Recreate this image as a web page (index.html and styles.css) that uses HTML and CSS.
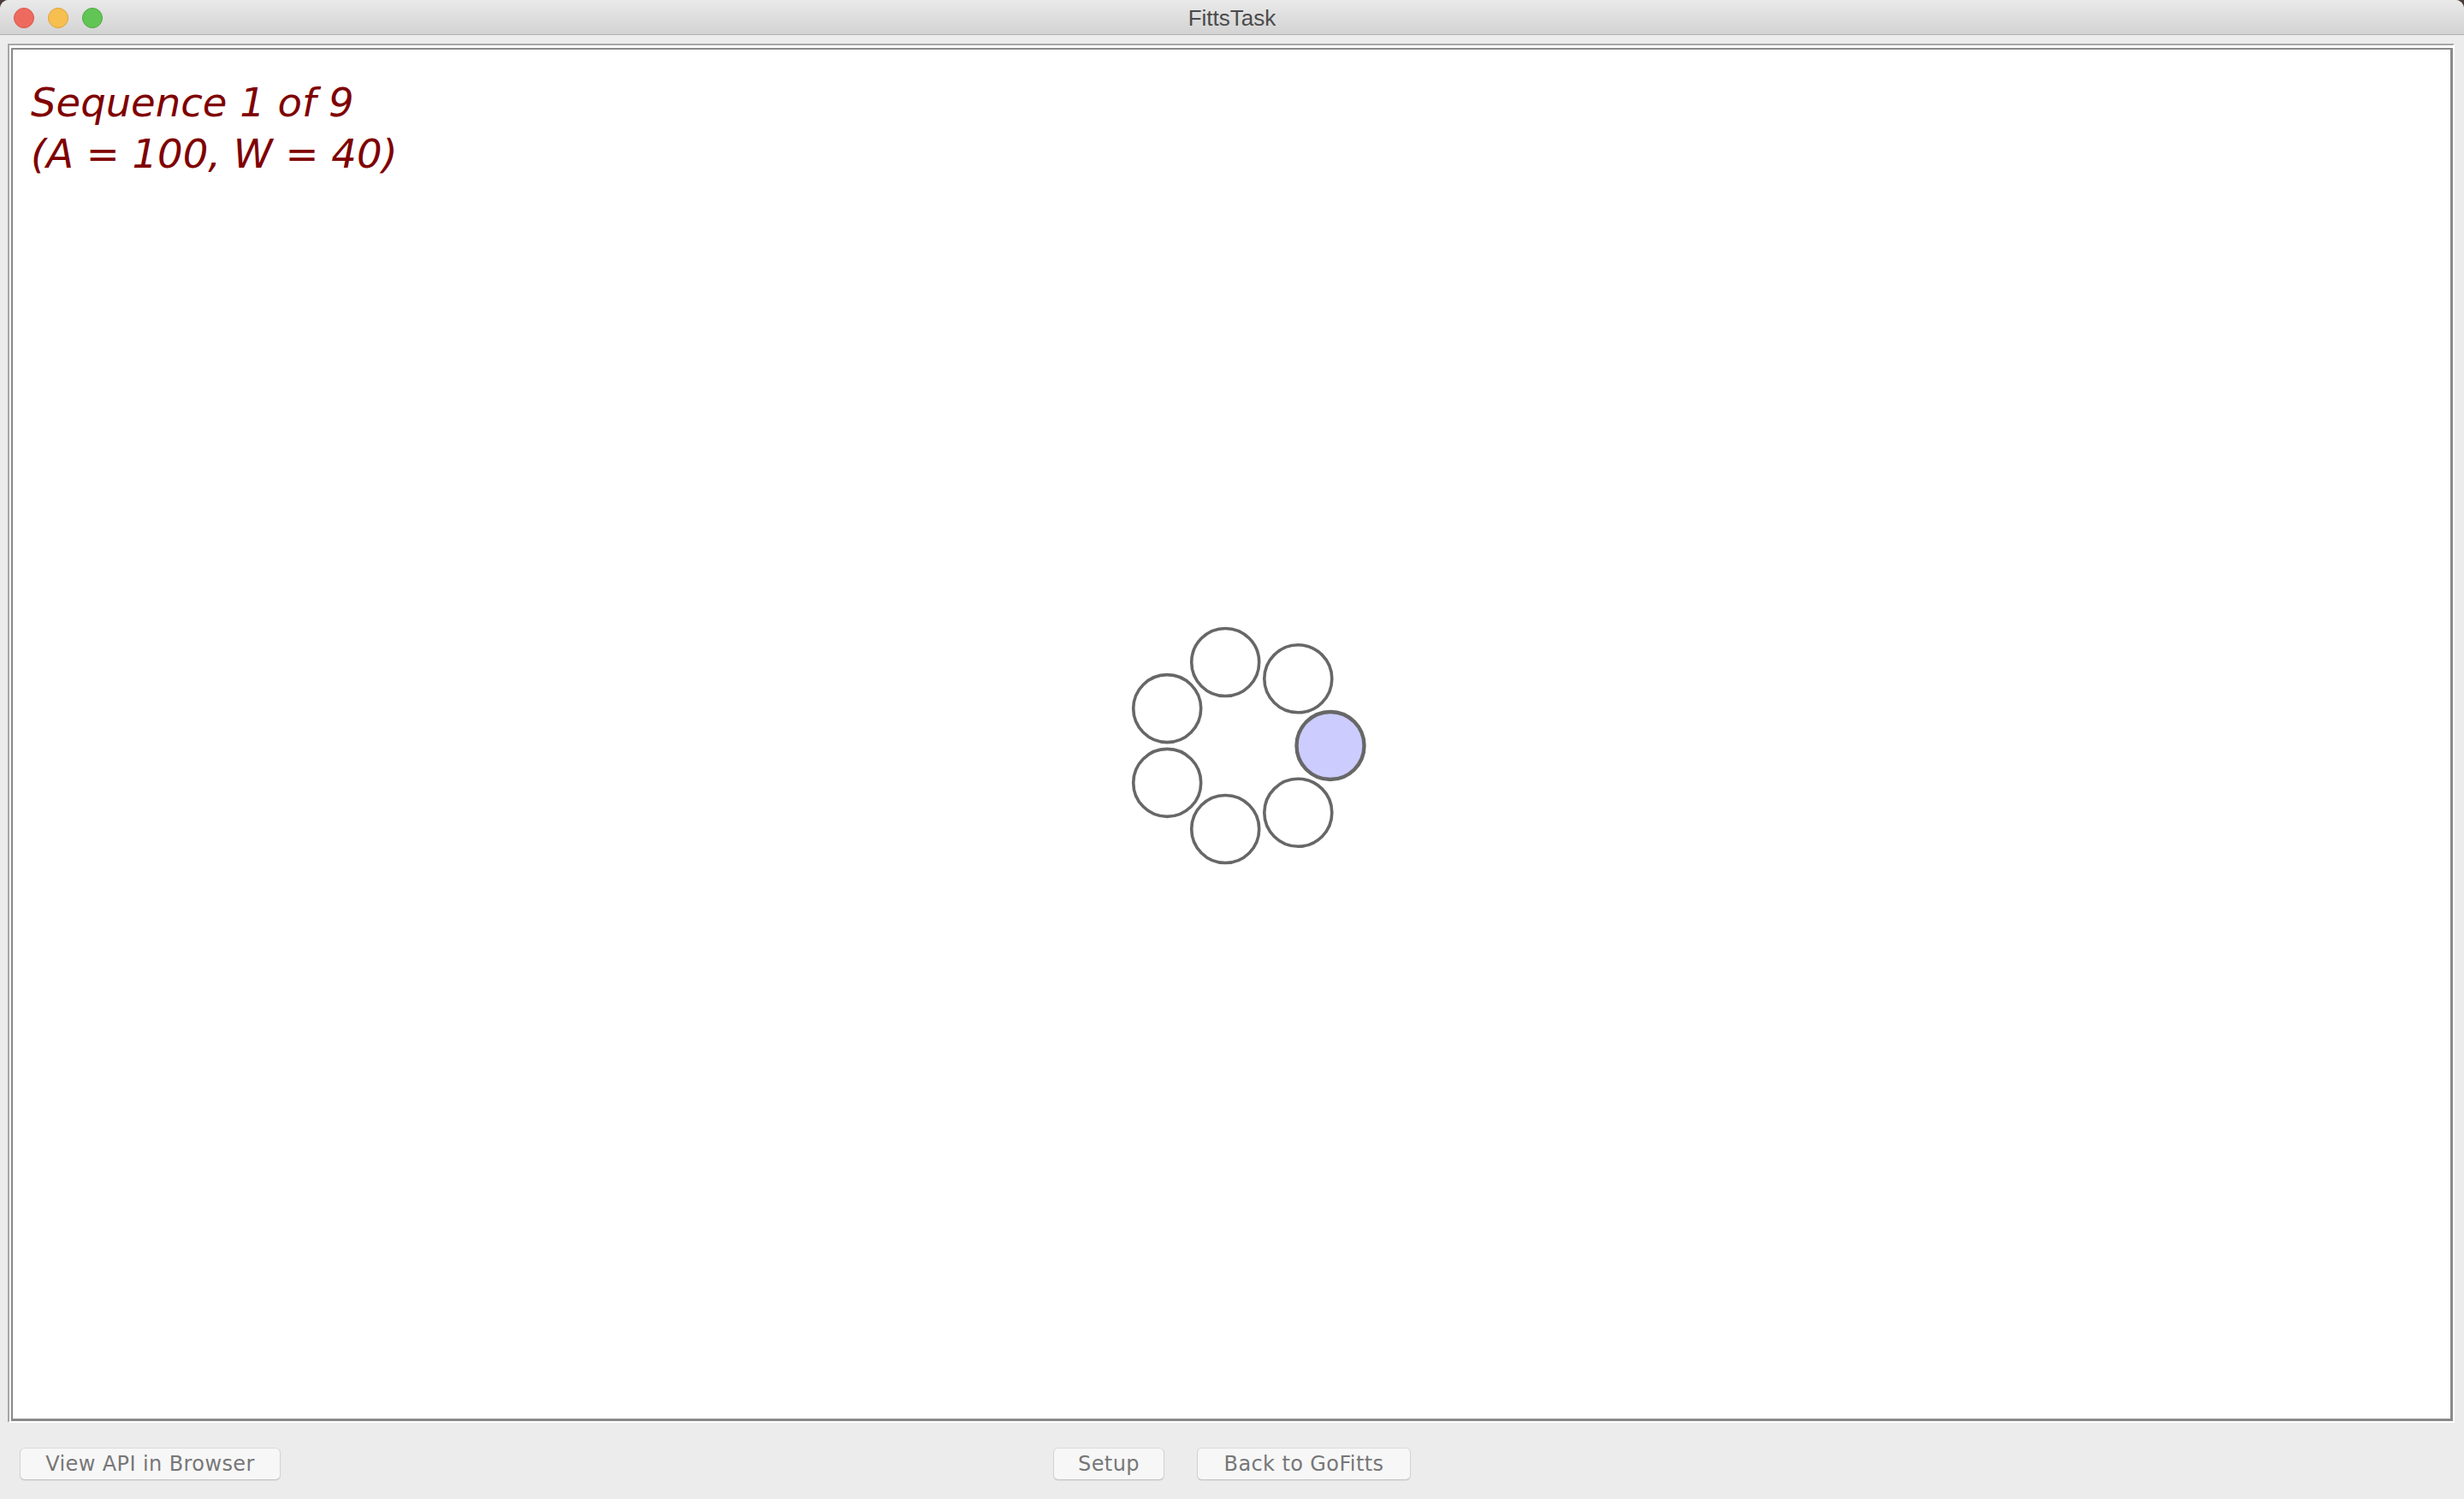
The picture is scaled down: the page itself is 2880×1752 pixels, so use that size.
FILE: index.html
```html
<!DOCTYPE html>
<html>
<head>
<meta charset="utf-8">
<title>FittsTask</title>
<link rel="stylesheet" href="styles.css">
</head>
<body>
<div class="window">
  <div class="titlebar">
    <div class="lights">
      <span class="light red"></span>
      <span class="light yellow"></span>
      <span class="light green"></span>
    </div>
    <div class="title">FittsTask</div>
    <div></div>
  </div>
  <div class="frame">
    <div class="canvas">
      <div class="info">
        <div>Sequence 1 of 9</div>
        <div>(A = 100, W = 40)</div>
      </div>
      <svg class="targets" viewBox="0 0 2849 1600" preserveAspectRatio="xMinYMin meet">
        <circle class="target" cx="1502.3" cy="735.3" r="39.5"/>
        <circle class="target" cx="1417.2" cy="716.0" r="39.5"/>
        <circle class="target" cx="1349.2" cy="770.1" r="39.5"/>
        <circle class="target" cx="1349.2" cy="856.9" r="39.5"/>
        <circle class="target" cx="1417.2" cy="911.0" r="39.5"/>
        <circle class="target" cx="1502.3" cy="891.8" r="39.5"/>
        <circle class="target active" cx="1540" cy="813.5" r="39.5"/>
      </svg>
    </div>
  </div>
  <div class="bottombar">
    <div class="left">
      <button class="btn btn-api">View API in Browser</button>
    </div>
    <div class="center">
      <button class="btn btn-setup">Setup</button>
      <button class="btn btn-back">Back to GoFitts</button>
    </div>
    <div></div>
  </div>
</div>
</body>
</html>
```

FILE: styles.css
```css
html, body {
  margin: 0;
  padding: 0;
  background: #4a3c3a;
}

.window {
  width: 2880px;
  height: 1752px;
  display: flex;
  flex-direction: column;
  background: #ececec;
  border-radius: 10px 10px 0 0;
  overflow: hidden;
}

.titlebar {
  height: 40px;
  flex: none;
  border-bottom: 1px solid #b2b2b2;
  background: linear-gradient(#e9e9e9, #d3d3d3);
  display: grid;
  grid-template-columns: 1fr auto 1fr;
  align-items: center;
}

.lights {
  display: flex;
  gap: 16px;
  padding-left: 16px;
}

.light {
  width: 22px;
  height: 22px;
  border-radius: 50%;
  display: block;
  border: 1px solid transparent;
}

.red { background: #ee6a5f; border-color: #d8564b; }
.yellow { background: #f6bf50; border-color: #dfa23b; }
.green { background: #61c555; border-color: #4ea93f; }

.title {
  font-family: "Liberation Sans", Arial, sans-serif;
  font-size: 26px;
  color: #4b4b4b;
  line-height: 40px;
  padding-top: 1px;
}

.frame {
  flex: 1;
  margin: 10px 11px 0 9px;
  border-style: solid;
  border-width: 2px;
  border-color: #a6a6a6 #ffffff #ffffff #a6a6a6;
  padding: 3px 0 0 2px;
  background: #ffffff;
  display: flex;
  min-height: 0;
}

.canvas {
  flex: 1;
  position: relative;
  background: #ffffff;
  border-style: solid;
  border-color: #8a8a8a;
  border-width: 2px 3px 3px 2px;
}

.info {
  font-family: "DejaVu Sans", sans-serif;
  font-style: italic;
  font-size: 46.5px;
  line-height: 60px;
  color: #7f0000;
  padding: 32px 0 0 21px;
}

.targets {
  position: absolute;
  left: 0;
  top: 0;
  width: 2849px;
  height: 1600px;
}

.target {
  fill: #ffffff;
  stroke: #676767;
  stroke-width: 3.6;
}

.target.active {
  fill: #ccccff;
  stroke-width: 4.4;
}

.bottombar {
  height: 89px;
  flex: none;
  box-sizing: border-box;
  padding-top: 29px;
  display: grid;
  grid-template-columns: 1fr auto 1fr;
  align-items: start;
}

.left {
  padding-left: 23px;
}

.center {
  display: flex;
  gap: 38px;
}

.btn {
  font-family: "DejaVu Sans", sans-serif;
  font-size: 24px;
  letter-spacing: 0.4px;
  color: #777777;
  height: 38px;
  box-sizing: border-box;
  background: #f7f7f7;
  border: 1px solid #d2d2d2;
  border-top-color: #dcdcdc;
  border-bottom-color: #c4c4c4;
  border-radius: 6px;
  box-shadow: 0 1px 1px rgba(0, 0, 0, 0.06);
  padding: 0;
  margin: 0;
  line-height: 36px;
}

.btn-api { width: 305px; }
.btn-setup { width: 130px; }
.btn-back { width: 250px; }
```
